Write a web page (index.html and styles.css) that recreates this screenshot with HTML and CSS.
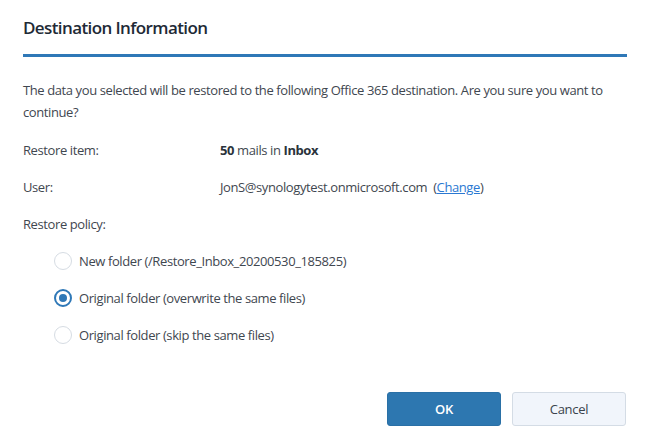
FILE: index.html
```html
<!DOCTYPE html>
<html>
<head>
<meta charset="utf-8">
<link rel="stylesheet" href="styles.css">
</head>
<body>
<div class="dialog">
  <div class="header">
    <h1 class="title">Destination Information</h1>
  </div>
  <div class="body">
    <p class="intro">The data you selected will be restored to the following Office 365 destination. Are you sure you want to continue?</p>
    <div class="row">
      <span class="label">Restore item:</span>
      <span class="value"><b>50</b> mails in <b>Inbox</b></span>
    </div>
    <div class="row">
      <span class="label">User:</span>
      <span class="value">JonS@synologytest.onmicrosoft.com&nbsp;&nbsp;(<a class="link" href="#">Change</a>)</span>
    </div>
    <div class="row">
      <span class="label">Restore policy:</span>
    </div>
    <div class="options">
      <label class="option"><span class="radio"></span>New folder (/Restore_Inbox_20200530_185825)</label>
      <label class="option"><span class="radio checked"></span>Original folder (overwrite the same files)</label>
      <label class="option"><span class="radio"></span>Original folder (skip the same files)</label>
    </div>
  </div>
  <div class="footer">
    <button class="btn primary">OK</button>
    <button class="btn">Cancel</button>
  </div>
</div>
</body>
</html>
```
FILE: styles.css
```css
html, body {
  margin: 0;
  padding: 0;
  background: #ffffff;
}
body {
  font-family: "Open Sans", "Liberation Sans", sans-serif;
  font-size: 13px;
  letter-spacing: -0.4px;
  color: #3f4750;
}
.dialog {
  width: 650px;
  height: 442px;
  box-sizing: border-box;
  padding: 0 23px 0 23px;
  display: flex;
  flex-direction: column;
}
.header {
  height: 54px;
  border-bottom: 3px solid #2f78b7;
  box-sizing: content-box;
  display: flex;
  align-items: center;
}
.title {
  margin: 0;
  padding-top: 1px;
  font-size: 17px;
  font-weight: 600;
  letter-spacing: -0.6px;
  color: #1e2a36;
}
.body {
  padding-top: 22px;
}
.intro {
  margin: 0;
  line-height: 22px;
}
.row {
  display: flex;
  height: 37px;
  align-items: center;
  margin-top: 0;
}
.row:first-of-type {
  margin-top: 8px;
}
.label {
  width: 197px;
}
.value b {
  font-weight: 700;
  color: #2b333b;
}
.link {
  color: #2a78d2;
  text-decoration: underline;
}
.options {
  padding-left: 31px;
  display: flex;
  flex-direction: column;
}
.option {
  display: flex;
  align-items: center;
  height: 37px;
}
.radio {
  width: 16px;
  height: 16px;
  border: 1px solid #d6dce3;
  border-radius: 50%;
  margin-right: 7px;
  box-sizing: content-box;
  background: #fff;
  position: relative;
}
.radio.checked {
  border: 2px solid #2f78b7;
  width: 14px;
  height: 14px;
}
.radio.checked::after {
  content: "";
  position: absolute;
  left: 3px;
  top: 3px;
  width: 8px;
  height: 8px;
  border-radius: 50%;
  background: #2f78b7;
}
.footer {
  margin-top: auto;
  margin-bottom: 16px;
  display: flex;
  justify-content: flex-end;
  gap: 11px;
  padding-right: 1px;
}
.btn {
  width: 114px;
  height: 34px;
  border-radius: 3px;
  border: 1px solid #d4dce5;
  background: #f1f5fb;
  font-family: inherit;
  font-size: 13px;
  letter-spacing: -0.3px;
  color: #3a434c;
}
.btn.primary {
  background: #2d77b0;
  border-color: #2a70a6;
  color: #ffffff;
  font-weight: 600;
}
```
